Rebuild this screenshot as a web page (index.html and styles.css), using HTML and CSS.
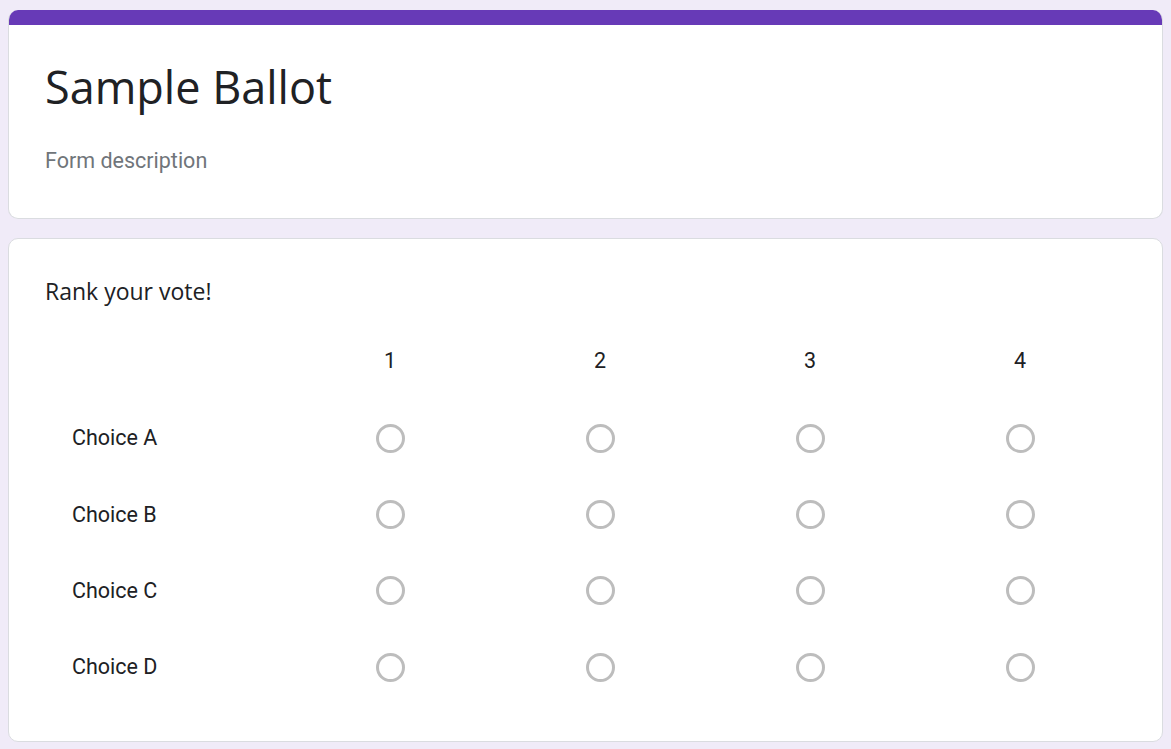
FILE: index.html
```html
<!DOCTYPE html>
<html lang="en">
<head>
<meta charset="utf-8">
<title>Sample Ballot</title>
<link rel="stylesheet" href="styles.css">
</head>
<body>
<main class="page">
  <section class="card header-card">
    <div class="accent"></div>
    <div class="header-body">
      <h1 class="title">Sample Ballot</h1>
      <p class="description">Form description</p>
    </div>
  </section>
  <section class="card question-card">
    <h2 class="question">Rank your vote!</h2>
    <div class="grid">
      <div class="cell corner"></div>
      <div class="cell colhead">1</div>
      <div class="cell colhead">2</div>
      <div class="cell colhead">3</div>
      <div class="cell colhead">4</div>

      <div class="cell rowlabel">Choice A</div>
      <div class="cell"><span class="radio"></span></div>
      <div class="cell"><span class="radio"></span></div>
      <div class="cell"><span class="radio"></span></div>
      <div class="cell"><span class="radio"></span></div>

      <div class="cell rowlabel">Choice B</div>
      <div class="cell"><span class="radio"></span></div>
      <div class="cell"><span class="radio"></span></div>
      <div class="cell"><span class="radio"></span></div>
      <div class="cell"><span class="radio"></span></div>

      <div class="cell rowlabel">Choice C</div>
      <div class="cell"><span class="radio"></span></div>
      <div class="cell"><span class="radio"></span></div>
      <div class="cell"><span class="radio"></span></div>
      <div class="cell"><span class="radio"></span></div>

      <div class="cell rowlabel">Choice D</div>
      <div class="cell"><span class="radio"></span></div>
      <div class="cell"><span class="radio"></span></div>
      <div class="cell"><span class="radio"></span></div>
      <div class="cell"><span class="radio"></span></div>
    </div>
  </section>
</main>
</body>
</html>
```

FILE: styles.css
```css
html, body {
  margin: 0;
  padding: 0;
  background: #f0ebf8;
}
body {
  font-family: Roboto, "Liberation Sans", sans-serif;
  color: #202124;
}
.page {
  padding: 10px 8px 0 8px;
  display: flex;
  flex-direction: column;
  gap: 19px;
}
.card {
  background: #fff;
  border: 1px solid #dadce0;
  border-radius: 10px;
  box-sizing: border-box;
}
.header-card {
  height: 209px;
  overflow: hidden;
  border-top: none;
}
.accent {
  height: 15px;
  background: #673ab7;
}
.header-body {
  padding: 0 36px;
}
.title {
  margin: 0;
  padding-top: 34px;
  font-family: "Open Sans", sans-serif;
  font-weight: 400;
  font-size: 45px;
  line-height: 56px;
  color: #202124;
  letter-spacing: 0;
}
.description {
  margin: 32px 0 0 0;
  font-size: 21.5px;
  line-height: 28px;
  color: #70757a;
}
.question-card {
  height: 504px;
  padding: 37px 36px 0 36px;
}
.question {
  margin: 0;
  font-family: "Open Sans", sans-serif;
  font-weight: 400;
  font-size: 23px;
  line-height: 30px;
  color: #202124;
}
.grid {
  margin-top: 41px;
  display: grid;
  grid-template-columns: 240px repeat(4, 210px);
  grid-template-rows: 53px;
  grid-auto-rows: 76.4px;
}
.cell {
  display: flex;
  align-items: center;
  justify-content: center;
  font-size: 21.5px;
  line-height: 28px;
}
.colhead {
  align-items: flex-start;
}
.rowlabel {
  justify-content: flex-start;
  padding-left: 27px;
}
.radio {
  width: 23px;
  height: 23px;
  border: 3px solid #bdbdbd;
  border-radius: 50%;
}
```
